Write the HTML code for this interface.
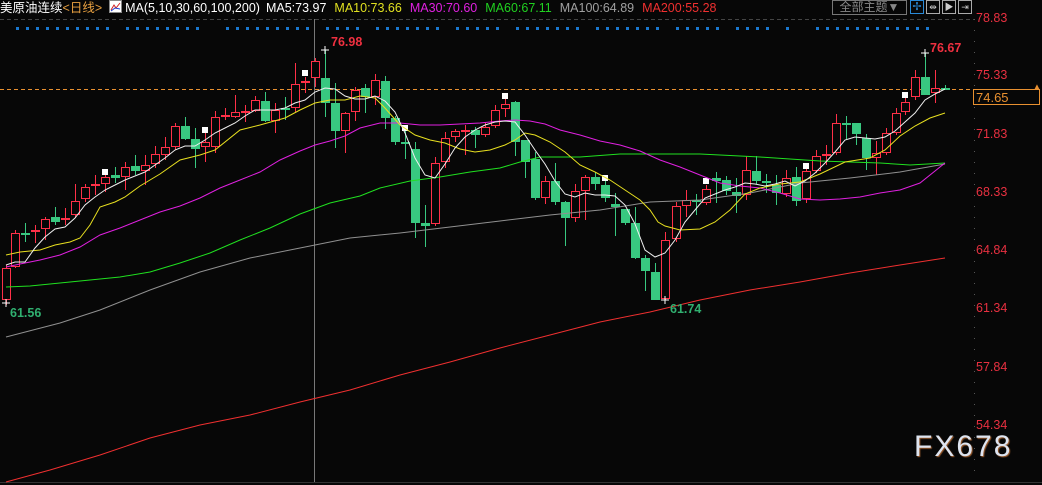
<!DOCTYPE html>
<html><head><meta charset="utf-8"><style>
html,body{margin:0;padding:0;background:#070707;width:1042px;height:485px;overflow:hidden;font-family:"Liberation Sans","Noto Sans CJK SC",sans-serif}
#hdr{position:absolute;left:0;top:0;height:16px;font-size:12.5px;line-height:16px;white-space:nowrap}
#hdr span{margin-right:8px}
.lbl{position:absolute;font-size:12.5px;color:#e83040}
</style></head><body>
<div id="hdr"><span style="color:#fff;margin-right:0">美原油连续</span><span style="color:#e8a040;margin-right:7px">&lt;日线&gt;</span><span style="display:inline-block;width:11px;height:11px;background:#fff;border:1px solid #888;vertical-align:-1px;margin-right:3px;position:relative"><svg width="11" height="11" style="position:absolute;left:0;top:0"><path d="M1 9L4 4L6 7L10 2" stroke="#d02020" fill="none"/><path d="M1 10L5 7L10 8" stroke="#2040d0" fill="none"/></svg></span><span style="color:#fff;margin-right:6px">MA(5,10,30,60,100,200)</span><span style="color:#fff">MA5:73.97</span><span style="color:#e0e020">MA10:73.66</span><span style="color:#e020e0">MA30:70.60</span><span style="color:#20d020">MA60:67.11</span><span style="color:#a0a0a0">MA100:64.89</span><span style="color:#f03030">MA200:55.28</span></div>
<div style="position:absolute;left:832px;top:0;width:73px;height:13px;border:1px solid #777;color:#888;font-size:12px;line-height:13px;text-align:center">全部主题▼</div>
<div style="position:absolute;left:910px;top:0;width:12px;height:12px;border:1px solid #2a8ad8;color:#2a8ad8;font-size:11px;line-height:12px;text-align:center">✢</div>
<div style="position:absolute;left:926px;top:0;width:12px;height:12px;border:1px solid #aaa;color:#ccc;font-size:9px;line-height:12px;text-align:center">⇹</div>
<div style="position:absolute;left:942px;top:0;width:12px;height:12px;border:1px solid #aaa;color:#ccc;font-size:9px;line-height:12px;text-align:center">▶</div>
<div style="position:absolute;left:958px;top:0;width:12px;height:12px;border:1px solid #aaa;color:#ccc;font-size:9px;line-height:12px;text-align:center">⇥</div>
<svg id="s" width="1042" height="485" style="position:absolute;left:0;top:0" xmlns="http://www.w3.org/2000/svg"></svg>
<div class="lbl" style="left:976px;top:11px">78.83</div>
<div class="lbl" style="left:976px;top:68px">75.33</div>
<div class="lbl" style="left:976px;top:127px">71.83</div>
<div class="lbl" style="left:976px;top:185px">68.33</div>
<div class="lbl" style="left:976px;top:243px">64.84</div>
<div class="lbl" style="left:976px;top:301px">61.34</div>
<div class="lbl" style="left:976px;top:360px">57.84</div>
<div class="lbl" style="left:976px;top:418px">54.34</div>
<div style="position:absolute;left:973px;top:89px;width:67px;height:16px;border:1px solid #e89030;color:#e89030;font-size:13px;line-height:16px;padding-left:2px;box-sizing:border-box;background:#070707">74.65</div>
<div style="position:absolute;left:1033px;top:82px;color:#e89030;font-size:8px">▲</div>
<div style="position:absolute;left:331px;top:35px;color:#f03040;font-size:12.5px;font-weight:bold">76.98</div>
<div style="position:absolute;left:930px;top:41px;color:#f03040;font-size:12.5px;font-weight:bold">76.67</div>
<div style="position:absolute;left:10px;top:306px;color:#30b070;font-size:12.5px;font-weight:bold">61.56</div>
<div style="position:absolute;left:670px;top:302px;color:#30b070;font-size:12.5px;font-weight:bold">61.74</div>
<div style="position:absolute;left:914px;top:430px;color:#dde4f0;font-size:30px;letter-spacing:2px;text-shadow:1px 1px 1px #a06030">FX678</div>
<script>
var s=document.getElementById('s'),h='';
h+='<line x1="0" y1="19.5" x2="974" y2="19.5" stroke="#444" stroke-dasharray="4,3"/>';
h+='<line x1="974.5" y1="19" x2="974.5" y2="480" stroke="#555" stroke-dasharray="1,10"/>';
h+='<line x1="0" y1="482.5" x2="1042" y2="482.5" stroke="#333"/>';
h+='<line x1="314.5" y1="19" x2="314.5" y2="482" stroke="#777"/>';
h+='<line x1="0" y1="89.5" x2="974" y2="89.5" stroke="#e89030" stroke-dasharray="4,3"/>';
var dx=[];
[[17,107],[127,197],[227,267],[277,307],[327,357],[377,437],[457,497],[517,577],[597,657],[677,717],[737,767],[787,787],[817,927]].forEach(function(g){for(var x=g[0];x<=g[1];x+=10)dx.push(x);});
dx.forEach(function(x){h+='<rect x="'+(x-1)+'" y="27" width="3" height="3" fill="#1a78d0"/>';});
var C=[[6,'r',268,300,265,305],[15,'r',233,267,230,268],[25,'g',233,234,223,242],[35,'r',230,232,225,243],[45,'r',219,229,217,240],[55,'g',217,222,207,225],[65,'r',218,220,208,225],[75,'r',201,215,184,218],[85,'r',187,199,184,202],[95,'r',184,186,175,195],[105,'r',177,184,170,192],[115,'g',175,178,167,183],[125,'r',167,177,162,190],[135,'g',166,171,155,175],[145,'r',165,171,155,185],[155,'r',154,164,146,168],[165,'r',147,155,137,160],[175,'r',126,147,123,150],[185,'g',126,139,117,140],[195,'g',139,149,128,168],[205,'r',142,147,133,162],[215,'r',117,147,111,153],[225,'r',115,117,108,120],[235,'r',112,117,95,118],[245,'r',111,112,105,122],[255,'r',100,111,96,112],[265,'g',101,121,92,122],[275,'r',110,121,103,133],[285,'g',108,110,97,120],[295,'r',84,108,63,112],[305,'r',81,83,77,93],[315,'r',61,78,58,87],[325,'g',78,103,50,117],[335,'g',103,131,83,148],[345,'r',113,131,112,153],[355,'r',90,112,87,121],[365,'g',88,97,84,113],[375,'r',80,97,74,105],[385,'g',81,118,76,129],[395,'g',118,142,116,145],[405,'g',142,143,130,159],[415,'g',149,223,142,238],[425,'g',223,226,205,247],[435,'r',163,224,157,226],[445,'r',138,162,132,168],[455,'r',131,137,129,142],[465,'r',130,131,125,155],[475,'g',130,135,127,148],[485,'r',127,135,123,137],[495,'r',110,126,105,128],[505,'r',104,109,96,117],[515,'g',102,142,101,156],[525,'g',140,162,140,178],[535,'g',159,198,152,200],[545,'r',181,198,176,204],[555,'g',181,202,163,205],[565,'g',202,218,201,246],[575,'r',191,218,184,222],[585,'r',177,191,175,220],[595,'g',177,184,172,190],[605,'g',185,198,180,202],[615,'g',204,207,193,236],[625,'g',209,223,209,225],[635,'g',223,258,207,259],[645,'g',258,271,255,291],[655,'g',272,300,263,300],[665,'r',240,299,232,300],[676,'r',206,239,202,242],[686,'r',200,206,190,217],[696,'g',200,202,194,215],[706,'r',189,203,185,205],[716,'g',178,181,172,203],[726,'g',180,191,176,195],[736,'g',192,196,178,213],[746,'r',170,195,156,200],[756,'g',171,181,156,184],[766,'g',181,183,174,193],[776,'g',185,193,175,205],[786,'r',178,194,170,197],[796,'g',177,201,167,206],[806,'r',171,199,167,203],[816,'r',156,171,150,173],[826,'r',154,155,145,165],[836,'r',123,153,114,155],[846,'g',123,124,116,139],[856,'g',123,134,123,145],[866,'g',138,158,134,170],[876,'r',153,158,141,175],[886,'r',133,153,128,155],[896,'r',113,133,108,135],[905,'r',102,112,98,115],[915,'r',77,97,70,100],[925,'g',77,95,53,95],[935,'r',88,93,70,103],[945,'g',88,89,85,90]];
C.forEach(function(c){var x=c[0],t=c[2],b=c[3];
 var col=c[1]=='r'?'#ff3048':'#38c880';
 h+='<line x1="'+(x+.5)+'" y1="'+c[4]+'" x2="'+(x+.5)+'" y2="'+c[5]+'" stroke="'+col+'"/>';
 if(b-t<2){h+='<rect x="'+(x-4)+'" y="'+t+'" width="9" height="2" fill="'+col+'"/>';}
 else if(c[1]=='r'){h+='<rect x="'+(x-3.5)+'" y="'+(t+.5)+'" width="8" height="'+(b-t-1)+'" fill="#070707" stroke="'+col+'"/>';}
 else{h+='<rect x="'+(x-4)+'" y="'+t+'" width="9" height="'+(b-t)+'" fill="'+col+'"/>';}
});
[[105,169],[205,127],[305,70],[405,125],[505,93],[605,175],[706,178],[806,163],[905,92]].forEach(function(m){h+='<rect x="'+(m[0]-3)+'" y="'+m[1]+'" width="6" height="6" fill="#fff"/>';});
h+='<path d="M2 303h8M6 299v8M321 50h8M325 46v8M661 300h8M665 296v8M921 53h8M925 49v8" stroke="#fff"/>';
function P(a,col){h+='<polyline fill="none" stroke="'+col+'" stroke-width="1" points="'+a+'"/>';}
P("6,482 50,470 100,455 150,438 200,425 250,415 300,402 350,390 400,375 450,362 500,348 550,335 600,322 650,312 700,300 750,290 800,282 850,273 900,265 945,258","#f03030");
P("6,337 60,323 100,310 150,290 200,272 250,258 300,248 350,238 400,233 450,227 500,221 550,215 600,210 650,202 700,200 750,193 800,183 850,178 900,172 945,164","#909090");
P("6,287 30,286 60,283 90,280 120,277 150,272 180,263 210,253 240,240 270,228 300,214 330,203 360,196 380,188 410,181 440,177 470,172 500,168 520,162 540,157 580,157 620,154 660,154 700,154 740,156 760,157 790,159 820,161 850,162 880,163 910,165 945,163","#20e020");
P("6,267 20,264 40,260 60,255 80,247 100,235 120,228 140,220 160,212 180,206 200,198 220,188 240,180 260,172 280,160 300,151 315,145 330,141 345,136 360,128 380,123 400,123 420,125 440,125 460,124 480,123 500,121 515,120 530,121 545,124 560,130 580,135 600,141 620,145 640,151 660,160 680,167 700,175 720,183 740,186 760,188 780,193 800,199 820,200 840,199 860,197 880,193 900,190 920,183 945,163","#e020e0");
P("6,255 20,252 40,250 55,245 70,242 80,238 90,225 100,207 115,202 125,197 140,186 160,174 180,160 200,155 215,150 240,130 260,125 285,118 300,110 315,103 330,100 345,100 360,96 375,98 385,108 400,125 415,135 430,140 445,143 460,149 475,152 490,150 505,145 515,140 525,133 535,135 550,142 565,152 580,165 595,172 610,180 625,190 640,200 650,210 658,222 665,226 680,230 700,229 715,222 730,210 745,194 760,188 780,184 800,182 820,174 845,162 870,158 885,150 900,136 915,126 930,118 945,113","#e8e020");
P("6,265 15,262 25,262 35,248 45,237 55,229 65,227 75,218 85,205 95,197 105,190 115,185 125,180 135,176 145,172 155,165 165,158 175,150 185,146 195,146 205,140 215,133 225,128 235,123 245,116 255,110 265,110 275,110 285,108 295,103 305,100 315,92 325,88 335,89 345,96 355,99 365,99 375,96 385,101 395,112 405,133 415,158 425,175 435,178 445,164 455,148 465,137 475,130 485,125 495,122 505,121 515,122 525,135 535,150 545,164 555,181 565,194 575,197 585,193 595,195 605,195 615,196 625,205 635,224 645,250 655,257 665,253 675,240 685,222 695,210 705,198 715,194 725,190 735,187 745,183 755,184 765,186 775,184 785,181 795,186 805,181 815,173 825,163 835,152 845,140 855,137 865,138 875,139 885,137 895,131 905,122 915,113 925,100 935,94 945,89","#f0f0f0");
s.innerHTML=h;
</script>
</body></html>
